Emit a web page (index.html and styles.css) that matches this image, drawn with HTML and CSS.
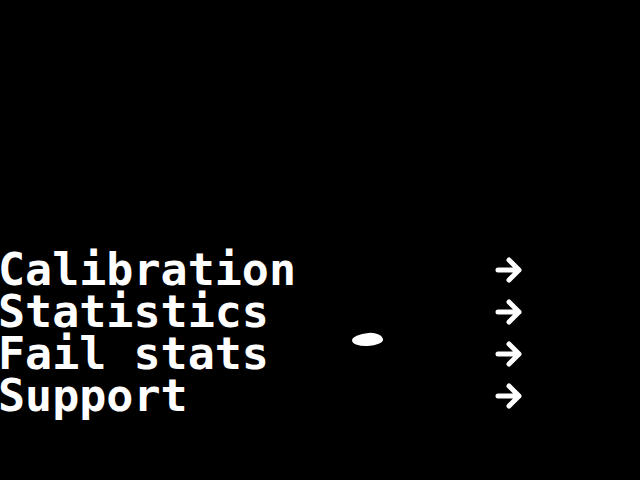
FILE: index.html
```html
<!DOCTYPE html>
<html>
<head>
<meta charset="utf-8">
<link rel="stylesheet" href="styles.css">
</head>
<body>
<div class="screen">
  <ul class="menu">
    <li class="item"><span class="label">Calibration</span><svg class="arrow" viewBox="0 0 30 28"><path d="M4 14H25M15 4L25 14L15 24"/></svg></li>
    <li class="item"><span class="label">Statistics</span><svg class="arrow" viewBox="0 0 30 28"><path d="M4 14H25M15 4L25 14L15 24"/></svg></li>
    <li class="item"><span class="label">Fail stats</span><svg class="arrow" viewBox="0 0 30 28"><path d="M4 14H25M15 4L25 14L15 24"/></svg></li>
    <li class="item"><span class="label">Support</span><svg class="arrow" viewBox="0 0 30 28"><path d="M4 14H25M15 4L25 14L15 24"/></svg></li>
  </ul>
  <div class="speck"></div>
</div>
</body>
</html>
```

FILE: styles.css
```css
html, body {
  margin: 0;
  padding: 0;
  background: #000;
}
.screen {
  position: relative;
  width: 640px;
  height: 480px;
  background: #000;
  overflow: hidden;
}
.menu {
  list-style: none;
  margin: 0;
  padding: 249px 0 0 0;
}
.item {
  display: grid;
  grid-template-columns: 494px 30px;
  align-items: center;
  height: 42px;
  margin-bottom: 0;
}
.item:nth-child(2) { height: 42px; }
.label {
  font-family: "DejaVu Sans Mono", monospace;
  font-weight: bold;
  font-size: 45px;
  line-height: 42px;
  color: #fff;
  white-space: pre;
  margin-left: -2px;
}
.arrow {
  width: 30px;
  height: 28px;
  fill: none;
  stroke: #fff;
  stroke-width: 5;
  stroke-linecap: round;
  stroke-linejoin: round;
}
.speck {
  position: absolute;
  left: 352px;
  top: 333px;
  width: 31px;
  height: 13px;
  background: #fff;
  border-radius: 55% 45% 50% 50% / 50% 60% 40% 50%;
  transform: rotate(-4deg);
}
```
